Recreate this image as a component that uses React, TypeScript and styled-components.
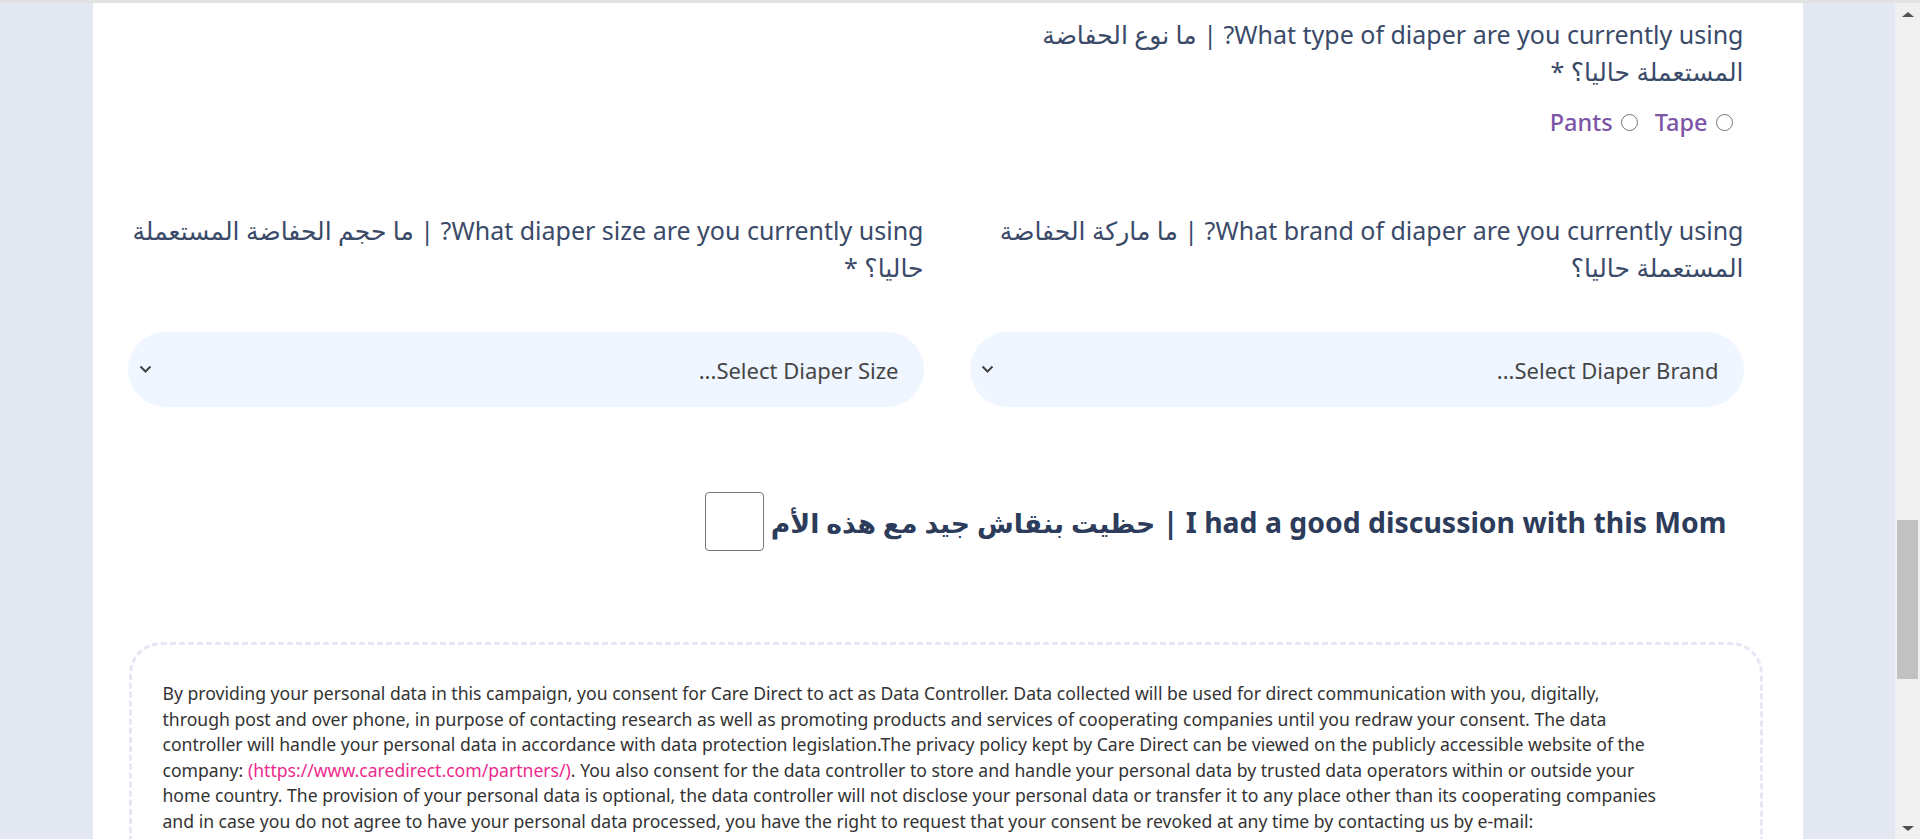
import React, { useState } from 'react'
import styled, { createGlobalStyle } from 'styled-components'

const GlobalStyle = createGlobalStyle`
  html, body {
    margin: 0;
    padding: 0;
    height: 839px;
    overflow: hidden;
    background: #e4e8f3;
    font-family: 'Noto Sans', 'DejaVu Sans', sans-serif;
  }
`

const Screen = styled.div`
  display: flex;
  flex-direction: column;
  height: 839px;
  border-top: 3px solid #e3e3e3;
  box-sizing: border-box;
`

const Body = styled.div`
  display: flex;
  flex: 1;
  min-height: 0;
`

const Viewport = styled.div`
  flex: 1;
  overflow: hidden;
  display: flex;
  justify-content: center;
`

const Panel = styled.div`
  width: 1710px;
  background: #fff;
  padding: 13px 40px 0 36px;
  box-sizing: border-box;
  direction: rtl;
`

const Question = styled.div`
  width: 774px;
  margin-right: 19px;
`

const Label = styled.div`
  font-size: 25px;
  line-height: 37px;
  color: #3a4a68;
`

const RadioRow = styled.div`
  display: flex;
  gap: 17px;
  margin-top: 14px;
  padding-right: 11px;
  height: 36px;
  align-items: center;
`

const RadioOption = styled.label`
  display: flex;
  align-items: center;
  gap: 8px;
  font-size: 23.5px;
  font-weight: 500;
  color: #7d55a6;
`

const Radio = styled.input`
  appearance: none;
  margin: 0;
  width: 17px;
  height: 17px;
  border: 1.5px solid #767676;
  border-radius: 50%;
  background: #fff;
`

const Grid = styled.div`
  display: grid;
  grid-template-columns: 774px 796px;
  column-gap: 46px;
  margin-top: 72px;
  padding-right: 19px;
`

const Field = styled.div`
  display: flex;
  flex-direction: column;
  gap: 46px;
`

const SelectWrap = styled.div`
  position: relative;
`

const Select = styled.select`
  appearance: none;
  width: 100%;
  height: 75px;
  border: none;
  border-radius: 38px;
  background: #eff6ff;
  padding: 0 25px 0 40px;
  font-family: 'Noto Sans', sans-serif;
  font-size: 22px;
  color: #454545;
  direction: rtl;
  outline: none;
`

const Chevron = styled.svg`
  position: absolute;
  left: 11px;
  top: 50%;
  margin-top: -5px;
  pointer-events: none;
`

const CheckRow = styled.label`
  display: flex;
  align-items: center;
  gap: 7px;
  margin-top: 85px;
  padding-right: 36px;
  font-size: 28.4px;
  font-weight: 700;
  color: #2c3c5a;
`

const Arabic = styled.span`
  font-size: 0.94em;
`

const Check = styled.input`
  appearance: none;
  margin: 0;
  width: 59px;
  height: 59px;
  border: 1.5px solid #767676;
  border-radius: 4px;
  background: #fff;
  flex-shrink: 0;
`

const Consent = styled.div`
  margin-top: 91px;
  border: 3px dashed #e4e8f3;
  border-radius: 32px;
  padding: 36px 12px 30px 31px;
  direction: ltr;
  font-size: 17.6px;
  line-height: 25.5px;
  color: #333;
`

const ConsentLine = styled.div`
  white-space: nowrap;
`

const Link = styled.a`
  color: #ec2a8d;
  text-decoration: none;
`

const Scrollbar = styled.div`
  width: 25px;
  background: #f0f0f0;
  display: flex;
  flex-direction: column;
  align-items: center;
`

const Arrow = styled.div<{ down?: boolean }>`
  width: 0;
  height: 0;
  border-left: 6px solid transparent;
  border-right: 6px solid transparent;
  ${({ down }) => (down ? 'border-top: 5px solid #505050;' : 'border-bottom: 5px solid #505050;')}
  margin: ${({ down }) => (down ? '0 0 8px' : '9px 0 0')};
`

const Track = styled.div`
  flex: 1;
  width: 100%;
  display: flex;
  flex-direction: column;
  align-items: center;
  padding-top: 503px;
`

const Thumb = styled.div`
  width: 21px;
  height: 159px;
  background: #c1c1c1;
`

const ChevronIcon = () => (
  <Chevron width="13" height="9" viewBox="0 0 13 9">
    <path d="M1.5 1.5 L6.5 6.5 L11.5 1.5" fill="none" stroke="#444" strokeWidth="2" />
  </Chevron>
)

export default function App() {
  const [type, setType] = useState('')
  const [good, setGood] = useState(false)

  return (
    <Screen>
      <GlobalStyle />
      <Body>
        <Viewport>
          <Panel>
            <Question>
              <Label>What type of diaper are you currently using? | ما نوع الحفاضة المستعملة حاليا؟ *</Label>
              <RadioRow>
                <RadioOption>
                  <Radio type="radio" name="type" checked={type === 'tape'} onChange={() => setType('tape')} />
                  Tape
                </RadioOption>
                <RadioOption>
                  <Radio type="radio" name="type" checked={type === 'pants'} onChange={() => setType('pants')} />
                  Pants
                </RadioOption>
              </RadioRow>
            </Question>

            <Grid>
              <Field>
                <Label>What brand of diaper are you currently using? | ما ماركة الحفاضة المستعملة حاليا؟</Label>
                <SelectWrap>
                  <Select defaultValue="">
                    <option value="">Select Diaper Brand...</option>
                  </Select>
                  <ChevronIcon />
                </SelectWrap>
              </Field>
              <Field>
                <Label>What diaper size are you currently using? | ما حجم الحفاضة المستعملة حاليا؟ *</Label>
                <SelectWrap>
                  <Select defaultValue="">
                    <option value="">Select Diaper Size...</option>
                  </Select>
                  <ChevronIcon />
                </SelectWrap>
              </Field>
            </Grid>

            <CheckRow>
              <span>
                I had a good discussion with this Mom | <Arabic>حظيت بنقاش جيد مع هذه الأم</Arabic>
              </span>
              <Check type="checkbox" checked={good} onChange={() => setGood(!good)} />
            </CheckRow>

            <Consent>
              <ConsentLine>By providing your personal data in this campaign, you consent for Care Direct to act as Data Controller. Data collected will be used for direct communication with you, digitally,</ConsentLine>
              <ConsentLine>through post and over phone, in purpose of contacting research as well as promoting products and services of cooperating companies until you redraw your consent. The data</ConsentLine>
              <ConsentLine>controller will handle your personal data in accordance with data protection legislation.The privacy policy kept by Care Direct can be viewed on the publicly accessible website of the</ConsentLine>
              <ConsentLine>company: <Link href="#">(https://www.caredirect.com/partners/)</Link>. You also consent for the data controller to store and handle your personal data by trusted data operators within or outside your</ConsentLine>
              <ConsentLine>home country. The provision of your personal data is optional, the data controller will not disclose your personal data or transfer it to any place other than its cooperating companies</ConsentLine>
              <ConsentLine>and in case you do not agree to have your personal data processed, you have the right to request that your consent be revoked at any time by contacting us by e-mail:</ConsentLine>
              <ConsentLine>info@caredirect.com</ConsentLine>
            </Consent>
          </Panel>
        </Viewport>
        <Scrollbar>
          <Arrow />
          <Track>
            <Thumb />
          </Track>
          <Arrow down />
        </Scrollbar>
      </Body>
    </Screen>
  )
}
